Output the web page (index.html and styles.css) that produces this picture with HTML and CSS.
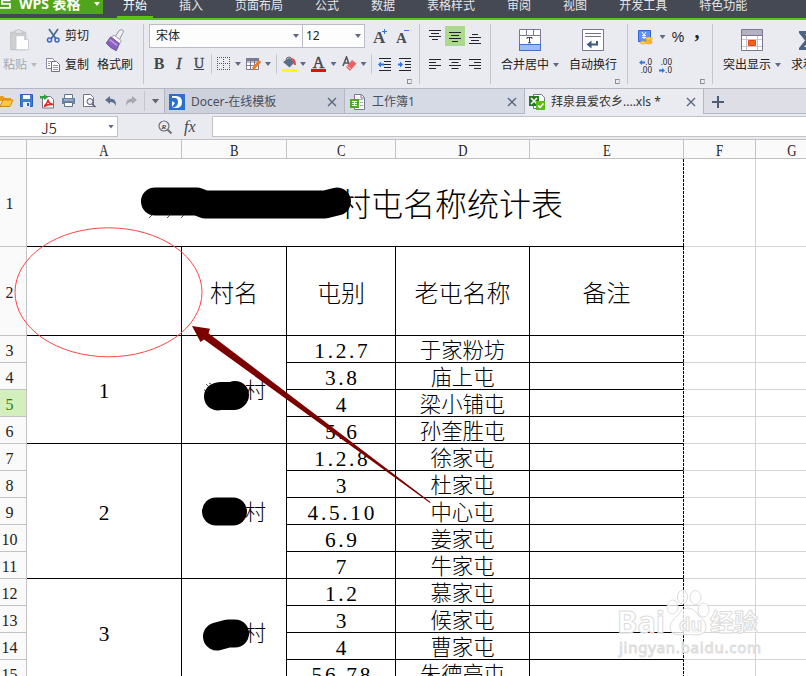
FILE: index.html
```html
<!DOCTYPE html>
<html lang="zh-CN">
<head>
    <meta charset="UTF-8">
    <meta name="viewport" content="width=device-width, initial-scale=1.0">
    <title>WPS 表格</title>
    <link rel="stylesheet" href="styles.css">
</head>
<body>
    <div class="menubar">
        <div class="brand">
            <svg width="12" height="14" viewBox="0 0 12 14"><path d="M10.500 .3H2v3.500h8v4H0" fill="none" stroke="#fff" stroke-width="1.700"/></svg>
            <span>WPS 表格</span>
            <i class="arrow light"></i>
        </div>
        <div class="menu">
            <span class="current">开始</span>
            <span>插入</span>
            <span>页面布局</span>
            <span>公式</span>
            <span>数据</span>
            <span>表格样式</span>
            <span>审阅</span>
            <span>视图</span>
            <span>开发工具</span>
            <span>特色功能</span>
        </div>
    </div>

    <div class="ribbon">
        <div class="group clipboard">
            <div class="big paste">
                <svg width="24" height="26" viewBox="0 0 24 26"><path d="M1.500 3.500h17v20h-17z" fill="#cfd0d2" stroke="#bbbcbf"/><path d="M6 5V2h2.500l1-1.500h2l1 1.500H15v3z" fill="#e4e5e7" stroke="#bbbcbf"/><path d="M7.500 7.500h9l5 5v11h-14z" fill="#fff" stroke="#c5c6ca"/><path d="M16.500 7.500v5h5z" fill="#cfd0d3"/></svg>
                <div class="label">粘贴<i class="arrow pale"></i></div>
            </div>
            <div class="pair">
                <div><svg width="15" height="16" viewBox="0 0 15 16"><path d="M3 1l7 10M12 1L5 11" stroke="#4a6c99" stroke-width="1.800"/><circle cx="3.500" cy="12" r="2" fill="none" stroke="#3d66c4" stroke-width="1.500"/><circle cx="11" cy="12" r="2" fill="none" stroke="#3d66c4" stroke-width="1.500"/></svg>剪切</div>
                <div><svg width="15" height="16" viewBox="0 0 15 16"><path d="M.5 1.500h6l2 2v8h-8z" fill="#fff" stroke="#8c84a0"/><path d="M5.500 4.500h5l3 3v7h-8z" fill="#fff" stroke="#746c8a"/><path d="M2 4.500h3M2 6.500h2M2 8.500h2M7 8.500h5M7 10.500h5M7 12.500h5" stroke="#9b96aa"/></svg>复制</div>
            </div>
            <div class="big brush">
                <svg width="22" height="26" viewBox="0 0 22 26"><path d="M11 9l4.500-7q3-3 5 0 0 2-1 3l-3.500 7z" fill="#f1eff5" stroke="#8b8798"/><path d="M7 9l3-2 8 6-2 4z" fill="#f7f6fa" stroke="#9a94a8"/><path d="M6 9l10 7.500-3.500 8Q6 22 1 16z" fill="#8761bd" stroke="#6e4a9d"/><path d="M5 12l8.500 6.500" stroke="#b99adf" stroke-width="2"/></svg>
                <div class="label">格式刷</div>
            </div>
        </div>

        <div class="group font">
            <div class="font-pick">
                <div class="combo family">宋体<i class="arrow"></i></div>
                <div class="combo size">12<i class="arrow"></i></div>
                <svg class="grow" width="15" height="20" viewBox="0 0 15 20"><text x="0" y="16" font-size="17">A</text><path d="M9 4.500h5M11.500 2v5" stroke="#2f74e8"/></svg>
                <svg class="grow" width="15" height="20" viewBox="0 0 15 20"><text x="0" y="16" font-size="15">A</text><path d="M8 3.500h5" stroke="#2f74e8"/></svg>
            </div>
            <div class="font-tools">
                <b class="ch">B</b>
                <i class="ch">I</i>
                <u class="ch">U</u>
                <s class="bar"></s>
                <svg width="14" height="14" viewBox="0 0 14 14"><path d="M.5 0v14M6.500 0v14M12.500 0v14M0 .5h14M0 6.500h14M0 12.500h14" stroke="#555a66" stroke-dasharray="1 1"/></svg>
                <i class="arrow"></i>
                <svg width="16" height="14" viewBox="0 0 16 14"><path d="M.5 1.500h12v11H.5zM.5 8.500h12M4.500 4v8M8.500 4v8M.5 5h12" fill="#fff" stroke="#7d7992"/><path d="M0 1h13v3H0z" fill="#7d7992"/><path d="M7 12l7-8" stroke="#f07a1c" stroke-width="3"/></svg>
                <i class="arrow"></i>
                <s class="bar"></s>
                <svg width="16" height="16" viewBox="0 0 16 16"><path d="M1 6l6-4 6 4-5.500 5.500z" fill="#58708c"/><path d="M4 4.500Q4 1 7 1t2 3" fill="none" stroke="#6c5a62"/><path d="M9 3q4 0 4 6" fill="none" stroke="#e64a4a" stroke-width="2"/><path d="M0 13h15v3H0z" fill="#ff0"/></svg>
                <i class="arrow"></i>
                <span class="ch color">A</span>
                <i class="arrow"></i>
                <svg width="15" height="16" viewBox="0 0 15 16"><path d="M1 10l3.500-9L7 8M2 7h4" fill="none" stroke="#56585e" stroke-width="1.600"/><path d="M4 11l6-7 4.500 3.500L8 15z" fill="#ec6168"/><path d="M5 10l5 4" stroke="#fbd0d2"/></svg>
                <i class="arrow"></i>
                <s class="bar"></s>
                <svg width="14" height="14" viewBox="0 0 14 14"><path d="M1 1.500h12M6 4.500h7M6 7.500h7M6 10.500h7M1 13.500h12" stroke="#23252c"/><path d="M0 7.500l3-3v2h3v2H3v2z" fill="#2f74e8"/></svg>
                <svg width="14" height="14" viewBox="0 0 14 14"><path d="M1 1.500h12M7 4.500h6M7 7.500h6M7 10.500h6M1 13.500h12" stroke="#23252c"/><path d="M5 7.500l-3-3v2H0v2h2v2z" fill="#2f74e8"/></svg>
            </div>
            <i class="launcher"></i>
        </div>

        <div class="group align">
            <svg width="12" height="16" viewBox="0 0 12 16"><path d="M0 2.500h12M2 5.500h8M0 8.500h12M3 11.500h6" stroke="#23252c"/></svg>
            <span class="pressed"><svg width="12" height="16" viewBox="0 0 12 16"><path d="M0 4.500h12M2 7.500h8M0 10.500h12M3 13.500h6" stroke="#23252c"/></svg></span>
            <svg width="12" height="16" viewBox="0 0 12 16"><path d="M3 6.500h6M0 9.500h12M2 12.500h8M0 15.500h12" stroke="#23252c"/></svg>
            <svg width="12" height="16" viewBox="0 0 12 16"><path d="M0 3.500h12M0 6.500h7M0 9.500h12M0 12.500h7" stroke="#23252c"/></svg>
            <svg width="12" height="16" viewBox="0 0 12 16"><path d="M0 3.500h12M2.500 6.500h7M0 9.500h12M2.500 12.500h7" stroke="#23252c"/></svg>
            <svg width="12" height="16" viewBox="0 0 12 16"><path d="M0 3.500h12M5 6.500h7M0 9.500h12M5 12.500h7" stroke="#23252c"/></svg>
        </div>

        <div class="group cells">
            <div class="big merge">
                <svg width="23" height="23" viewBox="0 0 23 23"><path d="M.5.5h21v21H.5z" fill="#fff" stroke="#7a7693"/><path d="M.5 6.500h21M7.500 1v5M14.500 1v5" stroke="#7a7693"/><path d="M.5 15.500h21v6H.5z" fill="#9dbdf9" stroke="#3f71cf"/><path d="M8 10V8.500h5V10M10.500 8.500V14M9 13.800h3" fill="none" stroke="#444"/></svg>
                <div class="label">合并居中<i class="arrow"></i></div>
            </div>
            <div class="big">
                <svg width="23" height="23" viewBox="0 0 23 23"><path d="M.5.5h21v21H.5z" fill="#fff" stroke="#7a7693"/><path d="M3 4.500h16M3 7.500h16" stroke="#76728c"/><path d="M15 12v3.500H8" fill="none" stroke="#3c5a80" stroke-width="2"/><path d="M4.500 15.500l5-4v8z" fill="#3c5a80"/></svg>
                <div class="label">自动换行</div>
            </div>
            <i class="launcher"></i>
        </div>

        <div class="group number">
            <svg width="15" height="15" viewBox="0 0 15 15"><path d="M.5.5h12v11H.5z" fill="#5c93f5" stroke="#2d65d4"/><path d="M4 2l2 3 2-3M6 5v4M4 5.500h4M4 7.500h4" fill="none" stroke="#fff"/><ellipse cx="11" cy="12" rx="3.500" ry="2.500" fill="#f8b51d"/><ellipse cx="11" cy="8.500" rx="3.500" ry="1.500" fill="#ffd34a" stroke="#d79210" stroke-width=".5"/><ellipse cx="5" cy="12.500" rx="3" ry="1.600" fill="#ffd34a" stroke="#d79210" stroke-width=".5"/></svg>
            <i class="arrow"></i>
            <span class="percent">%</span>
            <span class="comma">,</span>
            <div class="decimal"><div><svg width="6" height="5" viewBox="0 0 6 5"><path d="M0 2.500L3 0v1.500h3v2H3V5z" fill="#2f74e8"/></svg>.0</div><div>.00</div></div>
            <div class="decimal second"><div>.00</div><div><svg width="6" height="5" viewBox="0 0 6 5"><path d="M6 2.500L3 0v1.500H0v2h3V5z" fill="#2f74e8"/></svg>.0</div></div>
            <i class="launcher"></i>
        </div>

        <div class="group styles">
            <div class="big">
                <svg width="23" height="23" viewBox="0 0 23 23"><path d="M.5.500h21v21H.5z" fill="#fff" stroke="#7a7693"/><path d="M1 1h20v5H1z" fill="#b3b1c2"/><path d="M.5 6.500h21" stroke="#7a7693"/><path d="M5.500 7v14M16.500 7v14M1 10.500h20M1 17.500h20" stroke="#c7c6d0"/><path d="M7.500 11.500h7v5h-7z" fill="#f6601f" stroke="#e04a10"/></svg>
                <div class="label">突出显示<i class="arrow"></i></div>
            </div>
            <div class="big sum">
                <svg width="18" height="23" viewBox="0 0 18 23"><path d="M0 2h17v5h-2l-1-2H6l5 6.500L5 18h9l1-2h2v5H0v-2l6-7.500L0 4z" fill="#4c6384"/></svg>
                <div class="label">求和<i class="arrow"></i></div>
            </div>
        </div>
    </div>

    <div class="tabbar">
        <div class="quick">
            <svg width="14" height="14" viewBox="0 0 14 14"><path d="M0 2h3l2 2h6v3H0z" fill="#e89c14"/><path d="M0 12.500L3 6h10l-3 6.500z" fill="#ffc840" stroke="#d58a10"/></svg>
            <svg width="14" height="14" viewBox="0 0 14 14"><path d="M.5.500h12v12H.5z" fill="#3f79d8" stroke="#2b5fb9"/><path d="M3 1h7v4H3z" fill="#fff"/><path d="M3 8h7v5H3z" fill="#e6eefb"/><path d="M7 9h2v3H7z" fill="#2b5fb9"/></svg>
            <svg width="15" height="15" viewBox="0 0 15 15"><path d="M2.500 2.500h8l3 3v8.500h-11z" fill="#fff" stroke="#76728c"/><path d="M4 12.500q4-4 4-7 0 4 5 5-5-.5-9 2" fill="none" stroke="#e12b20" stroke-width="1.600"/><path d="M0 2h4V0l4 3.500L4 6V4.500H0z" fill="#2f9e3c"/></svg>
            <svg width="14" height="14" viewBox="0 0 14 14"><path d="M2.500.500h8v4h-8z" fill="#fff" stroke="#5f7593"/><path d="M0 4h13v6H0z" fill="#6b82a3"/><path d="M2.500 8.500h8v4h-8z" fill="#fff" stroke="#5f7593"/><path d="M2 6h9" stroke="#c8d4e4"/></svg>
            <svg width="14" height="14" viewBox="0 0 14 14"><path d="M.5.500h7l3 3v9H.5z" fill="#fff" stroke="#76728c"/><circle cx="7" cy="7.500" r="3" fill="#e9edf3" stroke="#5a5770"/><path d="M9 10l3.500 3" stroke="#5a5770" stroke-width="1.600"/></svg>
            <svg width="13" height="12" viewBox="0 0 13 12"><path d="M0 5l5-4v2.500q6 0 6 6V11Q9.500 7 5 7v2z" fill="#596f8f"/></svg>
            <svg width="13" height="12" viewBox="0 0 13 12"><path d="M12 5L7 1v2.500q-6 0-6 6V11q1.500-4 6-4v2z" fill="#a5a8af"/></svg>
            <s class="bar"></s>
            <i class="arrow grey"></i>
        </div>
        <div class="tab docer">
            <svg width="16" height="16" viewBox="0 0 16 16"><path d="M0 0h16v16H0z" fill="#286fd2"/><path d="M3 2h4q6 0 6 6t-6 6H3q6-1 6-6T3 4z" fill="#fff"/><path d="M3 7l3 2-3 4z" fill="#fff"/></svg>
            <span>Docer-在线模板</span><svg class="close" width="10" height="10" viewBox="0 0 10 10"><path d="M1 1l8 8M9 1L1 9" stroke="#586880" stroke-width="1.400"/></svg>
        </div>
        <div class="tab">
            <svg width="16" height="16" viewBox="0 0 16 16"><path d="M4.500.500h7l3 3v12h-10z" fill="#fff" stroke="#777590"/><path d="M11 1v3h3" fill="none" stroke="#777590"/><path d="M8 5.500h5M10 8.500h3M10 11.500h3" stroke="#a5a3b0"/><path d="M0 5h9v9H0z" fill="#50a922"/><path d="M2 7.500h5M2 9.500h5M2 11.500h5M4.500 7v5" stroke="#fff"/></svg>
            <span>工作簿1</span><svg class="close" width="10" height="10" viewBox="0 0 10 10"><path d="M1 1l8 8M9 1L1 9" stroke="#586880" stroke-width="1.400"/></svg>
        </div>
        <div class="tab open">
            <svg width="16" height="16" viewBox="0 0 16 16"><path d="M4.500.500h8l3 3v11h-11z" fill="#fff" stroke="#777590"/><path d="M0 2h10v10H0z" fill="#26791f"/><path d="M2 4l6 6M8 4l-6 6" stroke="#fff" stroke-width="1.600"/><path d="M7 7h9v9H7z" fill="#5bbd12"/><path d="M9 11.500l2 2 3.500-4" fill="none" stroke="#fff" stroke-width="1.500"/></svg>
            <span>拜泉县爱农乡....xls *</span><svg class="close" width="10" height="10" viewBox="0 0 10 10"><path d="M1 1l8 8M9 1L1 9" stroke="#586880" stroke-width="1.400"/></svg>
        </div>
        <svg class="plus" width="12" height="12" viewBox="0 0 12 12"><path d="M6 0v12M0 6h12" stroke="#4f5c72" stroke-width="2"/></svg>
    </div>

    <div class="formula">
        <div class="name-box"><span>J5</span><i class="arrow"></i></div>
        <svg class="find" width="15" height="14" viewBox="0 0 15 14"><circle cx="6" cy="6" r="5" fill="none" stroke="#6c6f79" stroke-width="1.200"/><path d="M9.500 9.500l4 4" stroke="#6c6f79" stroke-width="2"/><text x="3.500" y="8.500" font-size="7" font-style="italic" font-weight="bold" fill="#444" font-family="Liberation Serif">R</text></svg>
        <span class="fx">fx</span>
        <div class="input"></div>
    </div>

    <div class="sheet">
        <div class="head"></div><div class="head"><span>A</span></div><div class="head"><span>B</span></div><div class="head"><span>C</span></div><div class="head"><span>D</span></div><div class="head"><span>E</span></div><div class="head"><span>F</span></div><div class="head"><span>G</span></div>

        <div class="no">1</div><div class="title">村屯名称统计表</div><div class="blank"></div><div class="blank"></div>
        <div class="no">2</div><div class="th"></div><div class="th">村名</div><div class="th">屯别</div><div class="th">老屯名称</div><div class="th edge">备注</div><div class="blank"></div><div class="blank"></div>

        <div class="no">3</div><div class="four">1</div><div class="four village">村</div><div>1.2.7</div><div>于家粉坊</div><div class="edge"></div><div class="blank"></div><div class="blank"></div>
        <div class="no">4</div><div>3.8</div><div>庙上屯</div><div class="edge"></div><div class="blank"></div><div class="blank"></div>
        <div class="no active">5</div><div>4</div><div>梁小铺屯</div><div class="edge"></div><div class="blank"></div><div class="blank"></div>
        <div class="no">6</div><div>5.6</div><div>孙奎胜屯</div><div class="edge"></div><div class="blank"></div><div class="blank"></div>

        <div class="no">7</div><div class="five">2</div><div class="five village">村</div><div>1.2.8</div><div>徐家屯</div><div class="edge"></div><div class="blank"></div><div class="blank"></div>
        <div class="no">8</div><div>3</div><div>杜家屯</div><div class="edge"></div><div class="blank"></div><div class="blank"></div>
        <div class="no">9</div><div>4.5.10</div><div>中心屯</div><div class="edge"></div><div class="blank"></div><div class="blank"></div>
        <div class="no">10</div><div>6.9</div><div>姜家屯</div><div class="edge"></div><div class="blank"></div><div class="blank"></div>
        <div class="no">11</div><div>7</div><div>牛家屯</div><div class="edge"></div><div class="blank"></div><div class="blank"></div>

        <div class="no">12</div><div class="four">3</div><div class="four village">村</div><div>1.2</div><div>慕家屯</div><div class="edge"></div><div class="blank"></div><div class="blank"></div>
        <div class="no">13</div><div>3</div><div>候家屯</div><div class="edge"></div><div class="blank"></div><div class="blank"></div>
        <div class="no">14</div><div>4</div><div>曹家屯</div><div class="edge"></div><div class="blank"></div><div class="blank"></div>
        <div class="no">15</div><div>56.78</div><div>朱德亮屯</div><div class="edge"></div><div class="blank"></div><div class="blank"></div>
    </div>

    <!-- marks drawn over the sheet -->
    <svg class="marks" width="806" height="676" viewBox="0 0 806 676">
        <path d="M683.500 159v517" stroke="#000" stroke-dasharray="3 1"/>
        <g fill="none" stroke="#000" stroke-linecap="round" stroke-linejoin="round">
            <path d="M155 201.500h42l8 3h120l12-3" stroke-width="28"/>
            <path d="M218 396.500l2-.5h14l1-1" stroke-width="28"/>
            <path d="M216 511.500h17" stroke-width="28"/>
            <path d="M217 636.500l11-3h7" stroke-width="28"/>
        </g>
        <path d="M149 218l3-3M167 218l3-3M181 218l3-3M204 390l4 1M206 384l3 3M209 383l2 1" stroke="#222" stroke-width=".8"/>
        <ellipse cx="108.500" cy="292.300" rx="93.500" ry="64.500" fill="none" stroke="#f44" stroke-width="1"/>
        <path d="M192 326l18 2.700-1.500 4.500L430.500 502l-.5.900L204 339.500l-3.500 2.500z" fill="#7d0000"/>
        <g class="watermark">
            <text x="617" y="633" font-size="31" textLength="48" lengthAdjust="spacingAndGlyphs">Bai</text>
            <ellipse cx="672.500" cy="607" rx="5.500" ry="7"/>
            <ellipse cx="682.500" cy="597" rx="5" ry="7"/>
            <ellipse cx="695.500" cy="597.500" rx="5.500" ry="7"/>
            <ellipse cx="703.500" cy="610" rx="5.500" ry="7"/>
            <path d="M688 608q6 0 10 7 8 6 8 12 0 8-10 8-8-1-16 0-10 0-10-8 0-5 8-12 4-7 10-7z"/>
            <text x="679" y="631" font-size="18">du</text>
            <text x="710" y="631" font-size="24">经验</text>
            <text x="619" y="653" font-size="15" textLength="142" class="site">jingyan.baidu.com</text>
        </g>
    </svg>
</body>
</html>
```
FILE: styles.css
```css
* {
    box-sizing: border-box;
}

body {
    margin: 0;
    width: 806px;
    height: 676px;
    overflow: hidden;
    position: relative;
    background: #fff;
    color: #222;
    font: 12px/16px "Noto Sans", "Noto Sans CJK SC", sans-serif;
}

svg {
    display: block;
    flex: none;
}

.arrow {
    display: inline-block;
    flex: none;
    width: 6px;
    height: 4px;
    background: #5f6a88;
    clip-path: polygon(0 0, 100% 0, 50% 100%);
}

.arrow.light {
    width: 6px;
    background: #fff;
}

.arrow.pale {
    background: #b9bac0;
}

.arrow.grey {
    width: 8px;
    height: 5px;
    background: #666;
}

.bar {
    width: 1px;
    height: 20px;
    background: #c4c6ce;
}

/* menu */
.menubar {
    display: flex;
    height: 20px;
    background: #454954;
    border-bottom: 2px solid #5cc216;
}

.brand {
    display: flex;
    width: 103px;
    height: 14px;
    background: #4fa51c;
    color: #fff;
    font-size: 14px;
    font-weight: bold;
    line-height: 7px;
    white-space: nowrap;
}

.brand span {
    width: 82px;
    padding-left: 7px;
}

.brand .arrow {
    margin-top: 2px;
}

.menu {
    display: flex;
    gap: 32px;
    padding-left: 20px;
    color: #e4e5e8;
    line-height: 12px;
}

.menu .current {
    color: #fff;
    height: 18px;
    margin: 0 -6px;
    padding: 0 6px;
    border-bottom: 2px solid #5cc216;
}

/* ribbon */
.ribbon {
    display: flex;
    height: 68px;
    padding-top: 4px;
    background: #eaebf0;
    overflow: hidden;
}

.group {
    position: relative;
    flex: none;
    height: 60px;
    border-right: 1px solid #c4c6ce;
}

.clipboard {
    display: flex;
    width: 144px;
}

.big {
    display: flex;
    flex-direction: column;
    align-items: center;
    padding-top: 5px;
    white-space: nowrap;
}

.big svg {
    height: 23px;
}

.label {
    display: flex;
    align-items: center;
    margin-top: 5px;
}

.label .arrow {
    margin-left: 4px;
}

.paste {
    width: 40px;
    color: #a7a8ae;
}

.brush {
    width: 42px;
}

.pair {
    width: 54px;
    padding: 4px 0 0 6px;
}

.pair div {
    display: flex;
    gap: 4px;
    height: 16px;
    margin-bottom: 13px;
}

.font {
    width: 276px;
    padding-left: 5px;
}

.font-pick {
    display: flex;
}

.combo {
    display: flex;
    align-items: center;
    justify-content: space-between;
    height: 24px;
    padding: 0 3px 0 6px;
    background: #fdfdfe;
    border: 1px solid #b9bbc8;
}

.family {
    width: 154px;
}

.size {
    width: 62px;
    padding-left: 3px;
    border-left: none;
}

.grow {
    margin: 3px 0 0 8px;
    fill: #4c4e55;
    font-family: "Liberation Serif", serif;
    font-weight: bold;
}

.font-tools {
    display: grid;
    grid-template-columns: 20px 20px 20px 5px 19px 10px 21px 8px 9px 17px 10px 21px 9px 23px 5px 10px 18px 21px;
    align-items: center;
    justify-items: center;
    height: 20px;
    margin-top: 6px;
}

.ch {
    font: 16px/18px "Liberation Serif", serif;
    color: #45474e;
}

b.ch {
    font-weight: bold;
}

i.ch {
    font-style: italic;
    -webkit-text-stroke: .4px #45474e;
}

u.ch {
    font-size: 14px;
    -webkit-text-stroke: .4px #45474e;
}

.color {
    width: 15px;
    height: 15px;
    line-height: 12px;
    text-align: center;
    border-bottom: 3px solid #f00;
    -webkit-text-stroke: .5px #45474e;
}

.launcher {
    position: absolute;
    right: 7px;
    bottom: 0;
    width: 5px;
    height: 5px;
    border: 1px solid #8a8c95;
    border-right-color: #b9bac2;
}

.align {
    display: grid;
    grid-template-columns: 20px 20px 20px;
    grid-template-rows: 20px 36px;
    align-items: center;
    justify-items: center;
    width: 71px;
    padding: 2px 0 0 5px;
}

.pressed {
    display: flex;
    align-items: center;
    justify-content: center;
    width: 20px;
    height: 20px;
    background: #acd98d;
}

.cells {
    display: flex;
    gap: 10px;
    width: 137px;
    padding-left: 10px;
}

.cells .big {
    width: 48px;
}

.cells .merge {
    width: 58px;
}

.number {
    display: grid;
    grid-template-columns: 26px 9px 22px 16px;
    grid-template-rows: 24px 30px;
    align-items: center;
    justify-items: center;
    width: 85px;
    padding: 1px 0 0 4px;
}

.percent {
    font: 14px "Liberation Sans", sans-serif;
}

.comma {
    font: bold 20px/10px "Liberation Serif", serif;
    margin-top: -12px;
}

.decimal {
    width: 14px;
    justify-self: start;
    margin: 4px 0 0 6px;
    text-align: right;
    font: 8px/8px "Noto Sans", sans-serif;
    white-space: nowrap;
}

.decimal svg {
    display: inline-block;
}

.decimal.second {
    grid-column: 2 / 4;
    margin-left: 0;
}

.styles {
    display: flex;
    border: none;
}

.styles .big {
    width: 78px;
}

.styles .big.sum {
    width: 34px;
}

/* tabs */
.tabbar {
    display: flex;
    height: 26px;
    background: #dedfe6;
    border-top: 1px solid #b5b7c3;
    border-bottom: 1px solid #b5b7c3;
}

.quick {
    display: grid;
    grid-template-columns: 17px 20px 21px 21px 21px 22px 19px 6px 17px;
    align-items: center;
    justify-items: center;
    width: 164px;
}

.quick svg:first-child {
    justify-self: start;
}

.tab {
    display: flex;
    align-items: center;
    width: 180px;
    height: 25px;
    padding: 1px 7px 0 5px;
    border-left: 1px solid #b5b7c3;
    border-bottom: 1px solid #b5b7c3;
    background: #d6dae4;
    color: #494f5c;
}

.tab span {
    flex: 1;
    padding: 1px 0 0 6px;
    white-space: nowrap;
}

.docer {
    background: #cdd1db;
    padding-left: 4px;
}

.tab.open {
    background: #eaebf0;
    border-bottom: none;
    border-right: 1px solid #b5b7c3;
    padding: 0 7px 0 4px;
    color: #333;
}

.plus {
    margin: 7px 0 0 8px;
}

/* formula bar */
.formula {
    display: flex;
    height: 26px;
    padding-top: 2px;
    background: #eaebf0;
    border-bottom: 1px solid #c2c2c2;
}

.name-box {
    display: flex;
    align-items: center;
    justify-content: flex-end;
    width: 118px;
    height: 21px;
    padding-right: 3px;
    background: #fff;
    border: 1px solid #c2c3c8;
    border-left: none;
}

.name-box span {
    width: 67px;
    padding-top: 2px;
    font: 15px/18px "Noto Sans CJK SC", sans-serif;
    font-weight: 300;
    color: #000;
}

.find {
    margin: 4px 0 0 40px;
}

.fx {
    width: 29px;
    margin-left: 11px;
    font: italic 16px/21px "Liberation Serif", serif;
    color: #44464d;
}

.input {
    flex: 1;
    height: 21px;
    margin-left: -1px;
    background: #fff;
    border: 1px solid #c2c3c8;
    border-right: none;
}

/* sheet */
.sheet {
    display: grid;
    grid-template-columns: 27px 155px 105px 109px 134px 154px 72px 50px;
    grid-template-rows: 19px 88px 89px repeat(13, 27px);
    font: 300 21.33px/1 "Liberation Serif", "Noto Sans CJK SC", serif;
    color: #000;
}

.sheet div {
    display: flex;
    align-items: center;
    justify-content: center;
    padding-top: 5px;
    border-right: 1px solid #000;
    border-bottom: 1px solid #000;
    white-space: nowrap;
}

/* number column, dots take the same step as digits */
.sheet .village + div,
.sheet .no + div:not(.four):not(.five):not(.title):not(.th) {
    letter-spacing: 2.7px;
    padding-left: 2.7px;
}

.sheet .head,
.sheet .no {
    padding-top: 3px;
    background: #fafafa;
    border-color: #c3c3c3;
    color: #222;
    font-size: 16px;
}

.sheet .head span {
    transform: scaleX(.8);
}

.sheet .head:nth-child(8) {
    padding-left: 22px;
    border-right: none;
}

.sheet .no {
    padding-right: 7px;
}

.sheet .active {
    background: #d3efbe;
    color: #2f7d0a;
}

.sheet .blank {
    border-color: #d4d4d4;
}

.sheet .blank + .blank {
    border-right: none;
}

.sheet .title {
    grid-column: span 5;
    justify-content: flex-end;
    padding-right: 121px;
    font-size: 32px;
    border-right: none;
}

.sheet .th {
    font-size: 24px;
}

.sheet .edge {
    border-right-color: #fff;
}

.sheet .four {
    grid-row: span 4;
}

.sheet .five {
    grid-row: span 5;
}

.sheet .village {
    justify-content: flex-end;
    padding-right: 20px;
}

.marks {
    position: absolute;
    left: 0;
    top: 0;
}

.watermark {
    fill: rgba(255, 255, 255, .8);
    stroke: #dcdcdc;
    stroke-width: 1;
    font-family: "Noto Sans", "Noto Sans CJK SC", sans-serif;
    font-weight: bold;
}

.watermark .site {
    font-weight: normal;
}
```
